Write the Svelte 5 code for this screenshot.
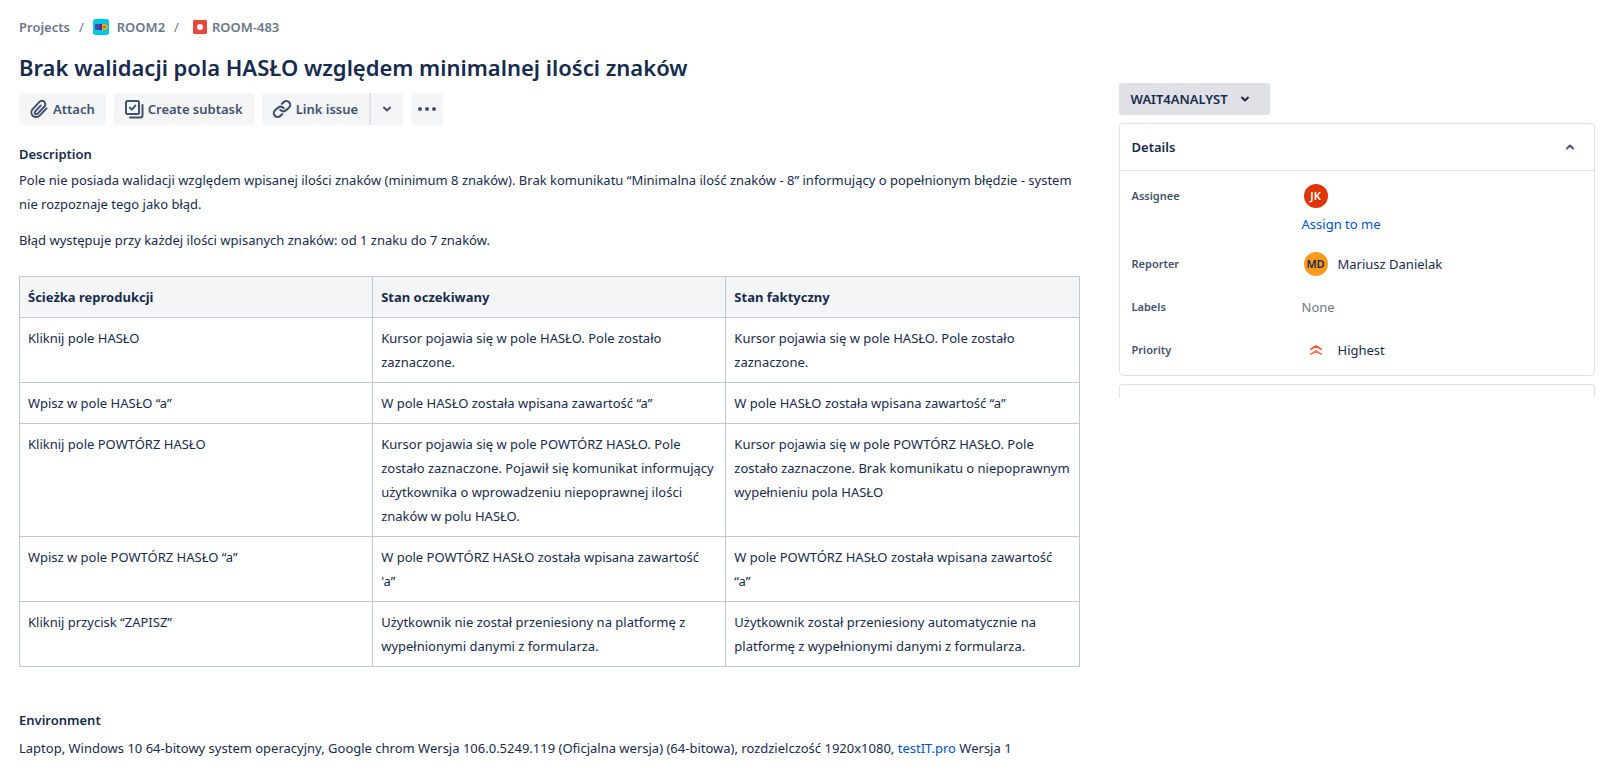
<script>
  const rows = [
    ['Kliknij pole HASŁO', 'Kursor pojawia się w pole HASŁO. Pole zostało zaznaczone.', 'Kursor pojawia się w pole HASŁO. Pole zostało zaznaczone.'],
    ['Wpisz w pole HASŁO “a”', 'W pole HASŁO została wpisana zawartość “a”', 'W pole HASŁO została wpisana zawartość “a”'],
    ['Kliknij pole POWTÓRZ HASŁO', 'Kursor pojawia się w pole POWTÓRZ HASŁO. Pole zostało zaznaczone. Pojawił się komunikat informujący użytkownika o wprowadzeniu niepoprawnej ilości znaków w polu HASŁO.', 'Kursor pojawia się w pole POWTÓRZ HASŁO. Pole zostało zaznaczone. Brak komunikatu o niepoprawnym wypełnieniu pola HASŁO'],
    ['Wpisz w pole POWTÓRZ HASŁO “a”', 'W pole POWTÓRZ HASŁO została wpisana zawartość\n\'a”', 'W pole POWTÓRZ HASŁO została wpisana zawartość\n“a”'],
    ['Kliknij przycisk “ZAPISZ”', 'Użytkownik nie został przeniesiony na platformę z wypełnionymi danymi z formularza.', 'Użytkownik został przeniesiony automatycznie na platformę z wypełnionymi danymi z formularza.'],
  ];
  let open = $state(true);
</script>

<div class="page">
  <main>
    <nav class="crumbs" aria-label="Breadcrumbs">
      <a href="#projects">Projects</a>
      <span class="slash">/</span>
      <a href="#room2" class="project">
        <svg width="16" height="16" viewBox="0 0 16 16" aria-hidden="true">
          <rect width="16" height="16" rx="2.5" fill="#00c7e5" />
          <rect x="2" y="5" width="7" height="6" rx=".5" fill="#5243aa" />
          <path d="M9 5h2.500a2.800 2.800 0 0 1 0 6H9z" fill="#ffab00" />
          <path d="M7 5h2v6H7z" fill="#403294" />
          <circle cx="11.2" cy="8" r="1.2" fill="#b65c02" />
        </svg>
        ROOM2
      </a>
      <span class="slash">/</span>
      <a href="#room-483" class="issue">
        <svg width="14" height="14" viewBox="0 0 14 14" aria-hidden="true">
          <rect width="14" height="14" rx="1.5" fill="#e5493a" />
          <circle cx="7" cy="7" r="3" fill="#fff" />
        </svg>
        ROOM-483
      </a>
    </nav>

    <h1>Brak walidacji pola HASŁO względem minimalnej ilości znaków</h1>

    <div class="actions">
      <button type="button">
        <svg width="20" height="20" viewBox="0 0 24 24" fill="none" stroke="currentColor" stroke-width="2.4" stroke-linecap="round" aria-hidden="true">
          <path d="M21 11.200l-8.200 8.700a5.700 5.700 0 0 1-8.400-7.800l8.200-8.600a4 4 0 0 1 5.900 5.500l-8 8.500a2 2 0 0 1-3-2.700l6.500-6.900" />
        </svg>
        Attach
      </button>
      <button type="button">
        <svg width="20" height="20" viewBox="0 0 20 20" fill="none" stroke="currentColor" stroke-width="2" stroke-linecap="round" stroke-linejoin="round" aria-hidden="true">
          <rect x="2" y="2" width="13" height="13" rx="1.5" />
          <path d="M5.800 8.600l2 2 3.600-4M18.500 6v10.500a2 2 0 0 1-2 2H6" />
        </svg>
        Create subtask
      </button>
      <div class="split">
        <button type="button">
          <svg width="20" height="20" viewBox="0 0 24 24" fill="none" stroke="currentColor" stroke-width="2.6" stroke-linecap="round" aria-hidden="true">
            <path d="M10 13a4.600 4.600 0 0 0 7 .3l3.300-2.800a4.600 4.600 0 0 0-6.300-6.800l-2.200 2M14 11a4.600 4.600 0 0 0-7-.3l-3.300 2.800a4.600 4.600 0 0 0 6.300 6.800l2.200-2" />
          </svg>
          Link issue
        </button>
        <button type="button" class="square" aria-label="Link options">
          <svg width="10" height="8" viewBox="0 0 10 8" fill="none" stroke="currentColor" stroke-width="2" stroke-linecap="round" stroke-linejoin="round" aria-hidden="true"><path d="M2 2.500l3 3 3-3" /></svg>
        </button>
      </div>
      <button type="button" class="square" aria-label="More actions">
        <svg width="18" height="4" viewBox="0 0 18 4" fill="currentColor" aria-hidden="true"><circle cx="2" cy="2" r="2" /><circle cx="9" cy="2" r="2" /><circle cx="16" cy="2" r="2" /></svg>
      </button>
    </div>

    <section class="description">
      <h2>Description</h2>
      <p>Pole nie posiada walidacji względem wpisanej ilości znaków (minimum 8 znaków). Brak komunikatu “Minimalna ilość znaków - 8” informujący o popełnionym błędzie - system nie rozpoznaje tego jako błąd.</p>
      <p>Błąd występuje przy każdej ilości wpisanych znaków: od 1 znaku do 7 znaków.</p>
      <table>
        <thead>
          <tr><th scope="col">Ścieżka reprodukcji</th><th scope="col">Stan oczekiwany</th><th scope="col">Stan faktyczny</th></tr>
        </thead>
        <tbody>
          {#each rows as row}
            <tr>{#each row as cell}<td>{cell}</td>{/each}</tr>
          {/each}
        </tbody>
      </table>
    </section>

    <section class="environment">
      <h2>Environment</h2>
      <p>Laptop, Windows 10 64-bitowy system operacyjny, Google chrom Wersja 106.0.5249.119 (Oficjalna wersja) (64-bitowa), rozdzielczość 1920x1080, <a href="#testit">testIT.pro</a> Wersja 1</p>
    </section>
  </main>

  <aside>
    <button type="button" class="status" aria-haspopup="listbox">
      WAIT4ANALYST
      <svg width="10" height="8" viewBox="0 0 10 8" fill="none" stroke="currentColor" stroke-width="2" stroke-linecap="round" stroke-linejoin="round" aria-hidden="true"><path d="M2 2.500l3 3 3-3" /></svg>
    </button>

    <section class="card">
      <button type="button" class="card-head" aria-expanded={open} onclick={() => (open = !open)}>
        Details
        <svg width="10" height="8" viewBox="0 0 10 8" fill="none" stroke="#42526e" stroke-width="2" stroke-linecap="round" stroke-linejoin="round" aria-hidden="true"><path d="M2 5.500l3-3 3 3" /></svg>
      </button>
      {#if open}
        <dl>
          <div class="field">
            <dt>Assignee</dt>
            <dd class="stack">
              <span class="lead"><span class="avatar red">JK</span></span>
              <a href="#assign">Assign to me</a>
            </dd>
          </div>
          <div class="field">
            <dt>Reporter</dt>
            <dd><span class="lead"><span class="avatar amber">MD</span></span>Mariusz Danielak</dd>
          </div>
          <div class="field">
            <dt>Labels</dt>
            <dd class="none">None</dd>
          </div>
          <div class="field">
            <dt>Priority</dt>
            <dd>
              <span class="lead">
                <svg width="14" height="12" viewBox="0 0 14 12" fill="none" stroke="#ff7452" stroke-width="2" stroke-linecap="round" stroke-linejoin="round" aria-hidden="true"><path d="M2 5l5-3 5 3" stroke="#ff5630" /><path d="M2 10l5-3 5 3" /></svg>
              </span>Highest
            </dd>
          </div>
        </dl>
      {/if}
    </section>
    <div class="card next"></div>
  </aside>
</div>

<style>
  :global(body) { margin: 0; background: #fff; }
  .page {
    display: grid;
    grid-template-columns: minmax(0, 69fr) minmax(0, 31fr);
    column-gap: 39px;
    padding: 15px 27px 9px 19px;
    color: #172b4d;
    font: 13px/24px "Noto Sans", "Open Sans", sans-serif;
  }
  a { color: #0052cc; text-decoration: none; }
  button {
    display: inline-flex;
    align-items: center;
    border: 0;
    margin: 0;
    font: inherit;
    font-weight: 600;
    color: #42526e;
    cursor: pointer;
  }
  .crumbs { display: flex; align-items: center; height: 24px; font-weight: 600; color: #6b778c; }
  .crumbs a { display: flex; align-items: center; gap: 8px; color: inherit; }
  .crumbs .issue { gap: 5px; padding-left: 5px; }
  .slash { padding: 0 9px; font-weight: 400; }
  h1 { margin: 14px 0 12px; font-size: 22px; line-height: 28px; font-weight: 600; }
  .actions { display: flex; gap: 8px; }
  .actions button { gap: 4px; height: 32px; padding: 0 11px 0 10px; border-radius: 3px; background: #f4f5f7; }
  .actions .square { justify-content: center; width: 32px; padding: 0; }
  .split { display: flex; }
  .split button:first-child { border-radius: 3px 0 0 3px; }
  .split .square { width: 34px; border-left: 2px solid #dfe1e6; border-radius: 0 3px 3px 0; }
  h2 { margin: 0; font-size: 13px; line-height: 20px; font-weight: 600; }
  p { margin: 0 0 12px; }
  .description { padding-top: 19px; }
  .description h2 { margin-bottom: 4px; }
  table { width: 100%; margin-top: 24px; border-collapse: collapse; table-layout: fixed; }
  th, td { padding: 8px; border: 1px solid #c1c7d0; text-align: left; vertical-align: top; white-space: pre-line; }
  th { background: #f4f5f7; font-weight: 700; }
  .environment { padding-top: 43px; }
  .environment h2 { margin-bottom: 6px; }
  .environment p { margin: 0; }

  aside { padding-top: 68px; }
  .status { gap: 12px; height: 32px; padding: 0 20px 0 12px; border-radius: 3px; background: #dfe1e6; color: #172b4d; }
  .card { margin-top: 8px; border: 1px solid #dfe1e6; border-radius: 4px; }
  .card-head { justify-content: space-between; width: 100%; height: 47px; padding: 0 19px 0 12px; border-bottom: 1px solid #dfe1e6; background: none; color: #172b4d; }
  dl { display: grid; gap: 11px; margin: 0; padding: 9px 12px; }
  .field { display: grid; grid-template-columns: 170px 1fr; align-items: start; }
  dt { font-size: 11px; line-height: 32px; font-weight: 600; color: #42526e; }
  dd { display: flex; align-items: center; height: 32px; margin: 0; }
  dd.stack { display: block; height: auto; }
  dd.none { color: #6b778c; }
  .stack a { display: block; line-height: 25px; }
  .lead { display: flex; align-items: center; justify-content: center; width: 28px; height: 32px; margin-right: 8px; }
  .avatar { width: 24px; border-radius: 50%; font-size: 11px; line-height: 24px; font-weight: 600; text-align: center; }
  .red { background: #de350b; color: #fff; }
  .amber { background: #ff991f; color: #172b4d; }
  .next { height: 13px; border-bottom: 0; border-radius: 4px 4px 0 0; }
</style>
